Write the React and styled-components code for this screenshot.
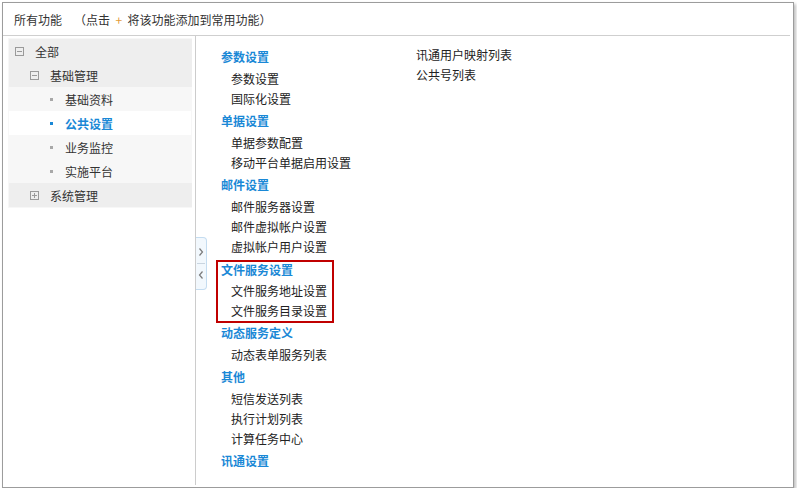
import React from "react";
import styled, { createGlobalStyle } from "styled-components";

const GlobalStyle = createGlobalStyle`
  html, body {
    margin: 0;
    padding: 0;
    background: #ffffff;
  }
  body {
    font-family: "Noto Sans CJK SC", "Liberation Sans", sans-serif;
    font-size: 12px;
    color: #333;
  }
`;

const BLUE = "#1a88d6";

const tree = [
  { label: "全部", level: 0, type: "minus" },
  { label: "基础管理", level: 1, type: "minus" },
  { label: "基础资料", level: 2, type: "leaf" },
  { label: "公共设置", level: 2, type: "leaf", active: true },
  { label: "业务监控", level: 2, type: "leaf" },
  { label: "实施平台", level: 2, type: "leaf" },
  { label: "系统管理", level: 1, type: "plus" },
];

const groups = [
  { title: "参数设置", items: ["参数设置", "国际化设置"] },
  { title: "单据设置", items: ["单据参数配置", "移动平台单据启用设置"] },
  { title: "邮件设置", items: ["邮件服务器设置", "邮件虚拟帐户设置", "虚拟帐户用户设置"] },
  { title: "文件服务设置", items: ["文件服务地址设置", "文件服务目录设置"], marked: true },
  { title: "动态服务定义", items: ["动态表单服务列表"] },
  { title: "其他", items: ["短信发送列表", "执行计划列表", "计算任务中心"] },
  { title: "讯通设置", items: [] },
];

const extra = ["讯通用户映射列表", "公共号列表"];

const BoxIcon = ({ plus }) => (
  <svg width="9" height="9" viewBox="0 0 9 9">
    <rect x="0.5" y="0.5" width="8" height="8" fill="none" stroke="#9a9a9a" />
    <line x1="2" y1="4.5" x2="7" y2="4.5" stroke="#9a9a9a" />
    {plus && <line x1="4.5" y1="2" x2="4.5" y2="7" stroke="#9a9a9a" />}
  </svg>
);

const Chevron = ({ left }) => (
  <svg width="6" height="8" viewBox="0 0 6 8">
    <polyline
      points={left ? "4.5,0.5 1.5,4 4.5,7.5" : "1.5,0.5 4.5,4 1.5,7.5"}
      fill="none"
      stroke="#7a7a7a"
      strokeWidth="1.2"
    />
  </svg>
);

export default function App() {
  return (
    <Page>
      <GlobalStyle />
      <Dialog>
        <Header>
          <span className="title">所有功能</span>
          <span className="hint">
            （点击&nbsp; <span className="plus">+</span> &nbsp;将该功能添加到常用功能）
          </span>
        </Header>
        <Body>
          <Side>
            <Tree>
              {tree.map((n) => (
                <TreeRow key={n.label} $level={n.level} $active={n.active}>
                  <span className="icon">
                    {n.type === "leaf" ? <Dot $active={n.active} /> : <BoxIcon plus={n.type === "plus"} />}
                  </span>
                  <span>{n.label}</span>
                </TreeRow>
              ))}
            </Tree>
          </Side>
          <Divider>
            <Toggle>
              <Chevron />
              <i />
              <Chevron left />
            </Toggle>
          </Divider>
          <Content>
            <Column>
              {groups.map((g) => (
                <Group key={g.title} $marked={g.marked}>
                  <GroupTitle $marked={g.marked}>{g.title}</GroupTitle>
                  {g.items.map((it) => (
                    <Item key={it}>{it}</Item>
                  ))}
                </Group>
              ))}
            </Column>
            <Column $second>
              {extra.map((it) => (
                <Item key={it} $flush>
                  {it}
                </Item>
              ))}
            </Column>
          </Content>
        </Body>
      </Dialog>
    </Page>
  );
}

const Page = styled.div`
  padding: 2px 0 0 2px;
`;

const Dialog = styled.div`
  width: 790px;
  height: 484px;
  border: 1px solid #9c9c9c;
  background: #fff;
  box-shadow: 2px 2px 3px rgba(0, 0, 0, 0.25);
  display: flex;
  flex-direction: column;
`;

const Header = styled.div`
  height: 32px;
  margin-right: 3px;
  border-bottom: 1px solid #cfcfcf;
  display: flex;
  align-items: center;
  padding-left: 11px;
  color: #333;
  .hint {
    margin-left: 12px;
  }
  .plus {
    color: #e39b3a;
  }
`;

const Body = styled.div`
  flex: 1;
  display: flex;
  min-height: 0;
`;

const Side = styled.div`
  width: 184px;
  padding: 2px 1px 0 5px;
`;

const Tree = styled.div`
  background: #f7f7f7;
  padding: 1px 0 1px 1px;
`;

const TreeRow = styled.div`
  height: 24px;
  display: flex;
  align-items: center;
  padding-left: ${(p) => (p.$level === 0 ? 6 : p.$level === 1 ? 21 : 40)}px;
  background: ${(p) => (p.$active ? "#fff" : p.$level < 2 ? "#eeeeee" : "transparent")};
  color: ${(p) => (p.$active ? BLUE : "#333")};
  font-weight: ${(p) => (p.$active ? "bold" : "normal")};
  margin-right: ${(p) => (p.$active ? 1 : 0)}px;
  .icon {
    width: ${(p) => (p.$level === 2 ? 16 : 20)}px;
    display: flex;
    align-items: center;
  }
`;

const Dot = styled.i`
  display: block;
  width: 3px;
  height: 3px;
  margin-left: 1px;
  background: ${(p) => (p.$active ? BLUE : "#a8a8a8")};
`;

const Divider = styled.div`
  width: 1px;
  margin-left: 2px;
  margin-bottom: 2px;
  background: #cccccc;
  position: relative;
`;

const Toggle = styled.div`
  position: absolute;
  left: 1px;
  top: 201px;
  width: 10px;
  height: 51px;
  border: 1px solid #c4dcf0;
  border-left: none;
  border-radius: 0 4px 4px 0;
  background: #f2f8fd;
  display: flex;
  flex-direction: column;
  align-items: center;
  justify-content: center;
  gap: 4px;
  i {
    display: block;
    width: 8px;
    height: 1px;
    background: #c9d5e0;
    margin: 3px 0;
  }
`;

const Content = styled.div`
  flex: 1;
  display: flex;
  padding: 9px 0 0 25px;
`;

const Column = styled.div`
  width: ${(p) => (p.$second ? "auto" : "195px")};
  display: flex;
  flex-direction: column;
  align-items: flex-start;
`;

const Group = styled.div`
  width: ${(p) => (p.$marked ? "118px" : "auto")};
  box-sizing: border-box;
  margin: ${(p) => (p.$marked ? "3px 0 -2px -5px" : "0")};
  padding-left: ${(p) => (p.$marked ? "3px" : "0")};
  border: ${(p) => (p.$marked ? "2px solid #c00000" : "none")};
`;

const GroupTitle = styled.div`
  height: ${(p) => (p.$marked ? 19 : 24)}px;
  line-height: ${(p) => (p.$marked ? 15 : 24)}px;
  color: ${BLUE};
  font-weight: bold;
`;

const Item = styled.div`
  height: 20px;
  line-height: 20px;
  padding-left: ${(p) => (p.$flush ? 0 : 10)}px;
  color: #222;
`;
